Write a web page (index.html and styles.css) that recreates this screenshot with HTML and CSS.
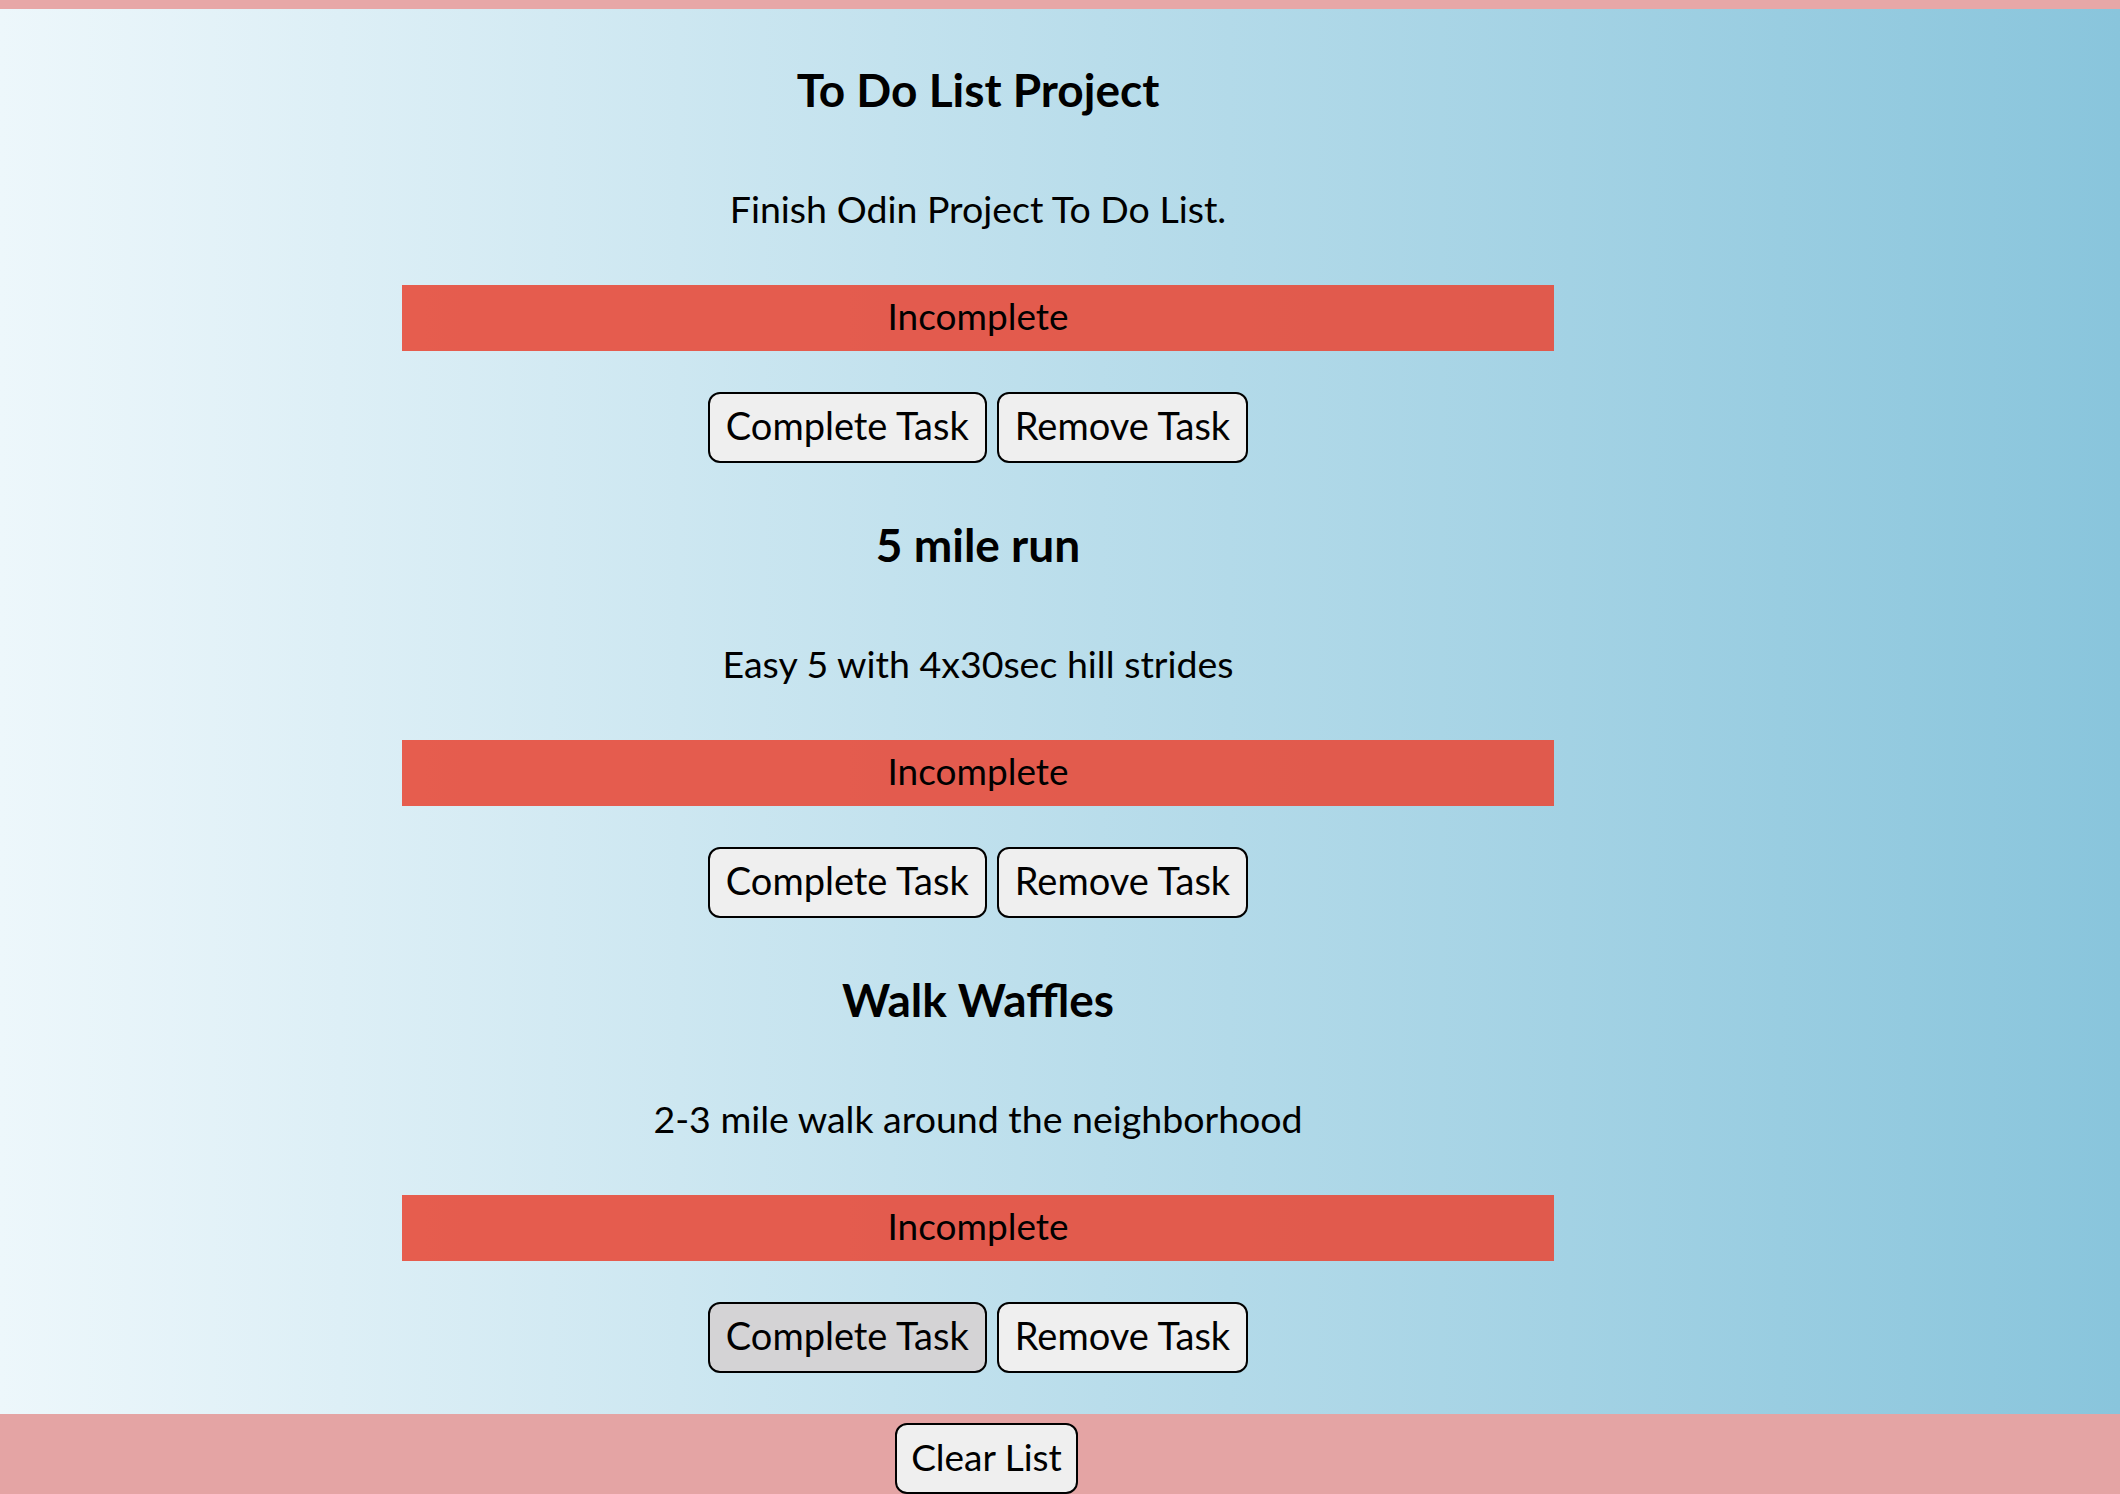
FILE: index.html
```html
<!DOCTYPE html>
<html lang="en">
<head>
<meta charset="utf-8">
<title>To Do List</title>
<link rel="stylesheet" href="styles.css">
</head>
<body>
<header class="topbar"></header>
<main class="tasks">
  <section class="task">
    <h2 class="task-title">To Do List Project</h2>
    <p class="task-desc">Finish Odin Project To Do List.</p>
    <div class="task-status">Incomplete</div>
    <div class="task-actions">
      <button class="btn">Complete Task</button>
      <button class="btn">Remove Task</button>
    </div>
  </section>
  <section class="task">
    <h2 class="task-title">5 mile run</h2>
    <p class="task-desc">Easy 5 with 4x30sec hill strides</p>
    <div class="task-status">Incomplete</div>
    <div class="task-actions">
      <button class="btn">Complete Task</button>
      <button class="btn">Remove Task</button>
    </div>
  </section>
  <section class="task">
    <h2 class="task-title">Walk Waffles</h2>
    <p class="task-desc">2-3 mile walk around the neighborhood</p>
    <div class="task-status">Incomplete</div>
    <div class="task-actions">
      <button class="btn btn-hover">Complete Task</button>
      <button class="btn">Remove Task</button>
    </div>
  </section>
</main>
<footer class="footer">
  <button class="btn btn-clear">Clear List</button>
</footer>
</body>
</html>
```

FILE: styles.css
```css
html, body {
  margin: 0;
  padding: 0;
}

body {
  font-family: Lato, "Open Sans", sans-serif;
  color: #000;
  background: linear-gradient(to right, #edf7fb, #89c5dc);
  min-height: 100vh;
}

.topbar {
  height: 9px;
  background: #e7a7a7;
}

.tasks {
  display: flex;
  flex-direction: column;
  gap: 52px;
  padding: 51px 164px 41px 0;
}

.task {
  display: flex;
  flex-direction: column;
  align-items: center;
}

.task-title {
  margin: 0;
  font-size: 46px;
  line-height: 60px;
  font-weight: 700;
  text-align: center;
}

.task-desc {
  margin: 65px 0 0;
  font-size: 37.5px;
  line-height: 48px;
  text-align: center;
}

.task-status {
  box-sizing: border-box;
  margin-top: 52px;
  width: 1152px;
  height: 66px;
  padding-bottom: 5px;
  line-height: 61px;
  font-size: 37px;
  text-align: center;
  background: rgba(231, 76, 60, 0.9);
}

.task-actions {
  margin-top: 41px;
  display: flex;
  justify-content: center;
  gap: 10px;
}

.btn {
  font-family: Lato, "Open Sans", sans-serif;
  font-size: 38px;
  height: 71px;
  padding: 0 16px 5px;
  border: 2px solid #000;
  border-radius: 12px;
  background: #efefef;
  color: #000;
}

.btn-hover {
  background: #d4d3d5;
}

.btn-clear {
  padding: 0 14px 5px;
  font-size: 37px;
}

.footer {
  display: flex;
  justify-content: center;
  padding: 9px 147px 20px 0;
  background: #e4a4a4;
}
```
